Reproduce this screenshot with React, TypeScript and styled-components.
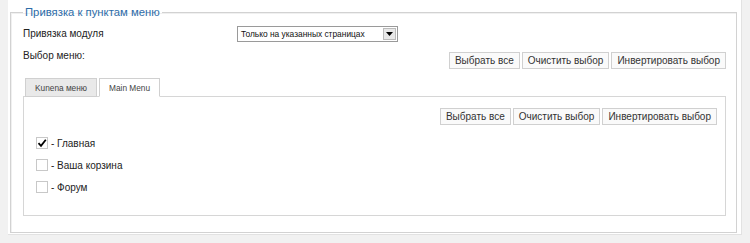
import React from "react";
import styled, { createGlobalStyle } from "styled-components";

const Global = createGlobalStyle`
  html, body { margin: 0; padding: 0; background: #f1f1f1; }
  body { font-family: "Liberation Sans", Arial, sans-serif; color: #333; }
`;

const Page = styled.div`
  width: 734px;
  height: 235px;
  margin-left: 8px;
  background: #fff;
  border-right: 1px solid #e2e2e2;
  border-bottom: 1px solid #e2e2e2;
  box-sizing: border-box;
  padding: 6px 4px 0 2px;
`;

const Fieldset = styled.fieldset`
  margin: 0;
  border: 1px solid #d2d2d2;
  box-shadow: inset 1px 1px 0 #f0f0f0;
  padding: 5px 10px 0 12px;
  height: 227px;
  box-sizing: border-box;
`;

const Legend = styled.legend`
  color: #2d6ca8;
  font-size: 11.3px;
  padding: 0 2px;
  margin-left: 0;
`;

const Row = styled.div`
  display: flex;
  align-items: center;
  height: 22px;
`;

const MenuRow = styled.div`
  display: flex;
  align-items: flex-start;
  justify-content: space-between;
  padding-top: 5px;
`;

const Label = styled.span<{ $w?: number }>`
  font-size: 10px;
  line-height: 12px;
  color: #222;
  ${(p) => (p.$w ? `width: ${p.$w}px;` : "")}
`;

const SelectBox = styled.div`
  display: flex;
  align-items: center;
  width: 159px;
  height: 14px;
  border: 1px solid #9a9a9a;
  background: #fff;
  font-size: 8.4px;
  color: #111;
  box-sizing: content-box;
`;

const SelectText = styled.span`
  flex: 1;
  padding-left: 3px;
  white-space: nowrap;
`;

const SelectArrow = styled.span`
  width: 13px;
  height: 12px;
  margin-right: 1px;
  background: #e8e8e8;
  border: 1px solid #bbb;
  box-sizing: border-box;
  display: flex;
  align-items: center;
  justify-content: center;
`;

const BtnGroup = styled.div<{ $top?: number }>`
  display: flex;
  gap: 2px;
  margin-top: ${(p) => p.$top ?? 0}px;
`;

const Btn = styled.button`
  height: 17px;
  padding: 0 5px;
  border: 1px solid #d0d0d0;
  background: #fafafa;
  font-family: "Liberation Sans", Arial, sans-serif;
  font-size: 10px;
  color: #333;
  cursor: pointer;
`;

const Tabs = styled.div`
  display: flex;
  gap: 2px;
  margin-left: 2px;
  margin-top: 9px;
  height: 19px;
  position: relative;
  z-index: 1;
`;

const Tab = styled.div<{ $active?: boolean }>`
  display: flex;
  align-items: center;
  padding: 0 9px;
  font-size: 8.3px;
  color: #444;
  border: 1px solid #d0d0d0;
  border-bottom: ${(p) => (p.$active ? "1px solid #fff" : "1px solid #d0d0d0")};
  background: ${(p) => (p.$active ? "#fff" : "#e9e9e9")};
  box-sizing: border-box;
  height: 19px;
`;

const Panel = styled.div`
  border: 1px solid #d6d6d6;
  margin-top: -1px;
  height: 120px;
  box-sizing: border-box;
  padding: 11px 8px 0 12px;
`;

const PanelButtons = styled.div`
  display: flex;
  justify-content: flex-end;
  margin-bottom: 7px;
`;

const Item = styled.div`
  display: flex;
  align-items: center;
  height: 22px;
  font-size: 10px;
  color: #222;
`;

const Check = styled.span`
  width: 10px;
  height: 10px;
  border: 1px solid #c8c8c8;
  background: #fff;
  margin-right: 3px;
  position: relative;
`;

const CheckMark = styled.svg`
  position: absolute;
  left: 0;
  top: 0;
`;

const items = [
  { label: "- Главная", checked: true },
  { label: "- Ваша корзина", checked: false },
  { label: "- Форум", checked: false },
];

const Buttons = ({ top }: { top?: number }) => (
  <BtnGroup $top={top}>
    <Btn>Выбрать все</Btn>
    <Btn>Очистить выбор</Btn>
    <Btn>Инвертировать выбор</Btn>
  </BtnGroup>
);

export default function App() {
  return (
    <>
      <Global />
      <Page>
        <Fieldset>
          <Legend>Привязка к пунктам меню</Legend>
          <Row>
            <Label $w={214}>Привязка модуля</Label>
            <SelectBox>
              <SelectText>Только на указанных страницах</SelectText>
              <SelectArrow>
                <svg width="7" height="4" viewBox="0 0 7 4">
                  <path d="M0 0h7L3.5 4z" fill="#000" />
                </svg>
              </SelectArrow>
            </SelectBox>
          </Row>
          <MenuRow>
            <Label>Выбор меню:</Label>
            <Buttons top={2} />
          </MenuRow>
          <Tabs>
            <Tab>Kunena меню</Tab>
            <Tab $active>Main Menu</Tab>
          </Tabs>
          <Panel>
            <PanelButtons>
              <Buttons />
            </PanelButtons>
            {items.map((it) => (
              <Item key={it.label}>
                <Check>
                  {it.checked && (
                    <CheckMark width="10" height="10" viewBox="0 0 10 10">
                      <path d="M1.5 5.2 L4 7.8 L8.8 1.8" stroke="#000" strokeWidth="1.8" fill="none" />
                    </CheckMark>
                  )}
                </Check>
                {it.label}
              </Item>
            ))}
          </Panel>
        </Fieldset>
      </Page>
    </>
  );
}
